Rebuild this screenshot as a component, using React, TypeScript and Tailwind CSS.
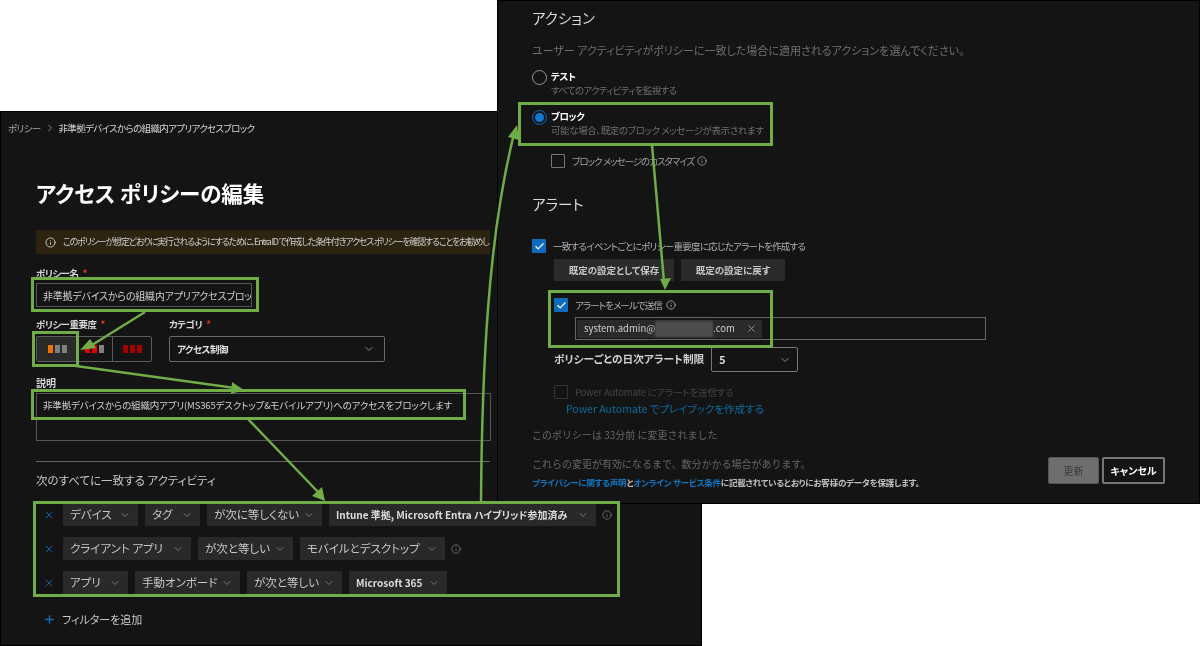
import React from "react";
import { Check, ChevronDown, ChevronRight, Info, Plus, X } from "lucide-react";

type ChipProps = { label: string; width: string; bold?: boolean };

const Chip: React.FC<ChipProps> = ({ label, width, bold }) => (
  <div className={`flex h-[23px] items-center justify-between bg-[#292929] pl-[7px] pr-[7px] ${width}`}>
    <span className={`whitespace-nowrap ${bold ? "text-[10px] font-bold text-[#dcdcdc]" : "text-[11.5px] text-[#c8c8c8]"}`}>{label}</span>
    <ChevronDown className="size-3 text-[#777]" />
  </div>
);

const FilterRow: React.FC<{ children: React.ReactNode; info?: boolean }> = ({ children, info }) => (
  <div className="flex h-[23px] items-center">
    <X className="ml-[42px] mr-[8px] size-3 text-[#0f6cbd]" strokeWidth={1.8} />
    <div className="flex gap-[7px]">{children}</div>
    {info && <Info className="ml-[6px] size-[10px] text-[#777]" />}
  </div>
);

const Required = () => <span className="ml-1 text-[#e03b1a]">*</span>;

const Bars: React.FC<{ colors: string[] }> = ({ colors }) => (
  <div className="flex gap-[2px]">
    <div className={`h-2 w-[5px] ${colors[0]}`} />
    <div className={`h-2 w-[5px] ${colors[1]}`} />
    <div className={`h-2 w-[5px] ${colors[2]}`} />
  </div>
);

const CheckBox: React.FC<{ on?: boolean; dim?: boolean }> = ({ on, dim }) => (
  <div
    className={`flex size-[14px] shrink-0 items-center justify-center rounded-[1px] ${
      on ? "bg-[#0f6cbd]" : dim ? "border border-[#333]" : "border border-[#777]"
    }`}
  >
    {on && <Check className="size-[11px] text-white" strokeWidth={2.5} />}
  </div>
);

const PolicyWindow = () => (
  <div className="absolute left-0 top-[111px] h-[535px] w-[702px] overflow-hidden border border-black bg-[#141414] text-[#d6d6d6] blur-[0.3px]">
    <div className="flex h-[32px] items-center pl-[7px] text-[9.5px] tracking-[-0.65px]">
      <span className="text-[#a8a8a8]">ポリシー</span>
      <ChevronRight className="mx-[3px] size-3 text-[#888]" />
      <span>非準拠デバイスからの組織内アプリアクセスブロック</span>
    </div>
    <div className="pl-[35px] pr-[211px]">
      <h1 className="mt-[31px] h-[36px] text-[21.5px] font-bold leading-[36px] text-white">アクセス ポリシーの編集</h1>
      <div className="mt-[19px] flex h-[24px] items-center overflow-hidden whitespace-nowrap bg-[#2c2310] pl-[9px] text-[9px] tracking-[-1.2px] text-[#cfcfcf]">
        <Info className="mr-[7px] size-[11px] shrink-0" />
        このポリシーが想定どおりに実行されるようにするために、Entra ID で作成した条件付きアクセス ポリシーを確認することをお勧めします
      </div>
      <label className="mt-[10px] block h-[19px] text-[9.5px] font-bold leading-[18px] tracking-[-0.5px]">
        ポリシー名
        <Required />
      </label>
      <div className="flex h-[24px] w-[216px] items-center overflow-hidden whitespace-nowrap border border-[#555] pl-[6px] pr-[5px] text-[10px] tracking-[-0.2px] text-[#cfcfcf]">
        非準拠デバイスからの組織内アプリアクセスブロック
      </div>
      <div className="mt-[8px] flex gap-[17px]">
        <div>
          <label className="block h-[21px] text-[9.5px] font-bold leading-[19px] tracking-[-0.5px]">
            ポリシー重要度
            <Required />
          </label>
          <div className="flex h-[26px] w-[116px] rounded-[2px] border border-[#5c5c5c]">
            <div className="flex w-[40px] items-center justify-center bg-[#2a2a2a]">
              <Bars colors={["bg-[#f07000]", "bg-[#808080]", "bg-[#808080]"]} />
            </div>
            <div className="flex w-[36px] items-center justify-center border-r border-[#5c5c5c]">
              <Bars colors={["bg-[#e00000]", "bg-[#e00000]", "bg-[#808080]"]} />
            </div>
            <div className="flex flex-1 items-center justify-center">
              <Bars colors={["bg-[#a00000]", "bg-[#a00000]", "bg-[#a00000]"]} />
            </div>
          </div>
        </div>
        <div>
          <label className="block h-[21px] text-[9.5px] font-bold leading-[19px] tracking-[-0.5px]">
            カテゴリ
            <Required />
          </label>
          <div className="flex h-[26px] w-[216px] items-center justify-between rounded-[2px] border border-[#6a6a6a] pl-[7px] pr-[9px] text-[9.5px] font-bold tracking-[-0.5px] text-[#e0e0e0]">
            アクセス制御
            <ChevronDown className="size-3 text-[#888]" />
          </div>
        </div>
      </div>
      <label className="mt-[11px] block h-[20px] text-[10px] font-bold leading-[19px]">説明</label>
      <div className="h-[48px] w-[455px] border border-[#555] pl-[6px] pt-[4px] text-[9.5px] tracking-[-0.15px] text-[#cfcfcf]">
        <span className="whitespace-nowrap">非準拠デバイスからの組織内アプリ(MS365デスクトップ&amp;モバイルアプリ)へのアクセスをブロックします</span>
      </div>
      <div className="mt-[20px] h-px bg-[#666]" />
      <div className="mt-[9px] h-[18px] text-[11.5px] leading-[18px] text-[#c8c8c8]">次のすべてに一致する アクティビティ</div>
    </div>
    <div className="mt-[14px] flex flex-col gap-[11px]">
      <FilterRow info>
        <Chip label="デバイス" width="w-[75px]" />
        <Chip label="タグ" width="w-[55px]" />
        <Chip label="が次に等しくない" width="w-[115px]" />
        <Chip label="Intune 準拠, Microsoft Entra ハイブリッド参加済み" width="w-[267px]" bold />
      </FilterRow>
      <FilterRow info>
        <Chip label="クライアント アプリ" width="w-[128px]" />
        <Chip label="が次と等しい" width="w-[95px]" />
        <Chip label="モバイルとデスクトップ" width="w-[145px]" />
      </FilterRow>
      <FilterRow>
        <Chip label="アプリ" width="w-[65px]" />
        <Chip label="手動オンボード" width="w-[105px]" />
        <Chip label="が次と等しい" width="w-[95px]" />
        <Chip label="Microsoft 365" width="w-[98px]" bold />
      </FilterRow>
    </div>
    <div className="mt-[14px] flex h-[22px] items-center pl-[42px] text-[11px] text-[#c8c8c8]">
      <Plus className="mr-[6px] size-[13px] text-[#0f6cbd]" strokeWidth={2.4} />
      フィルターを追加
    </div>
  </div>
);

const ActionWindow = () => (
  <div className="absolute left-[497px] top-0 flex h-[504px] w-[703px] border border-black bg-[#141414] text-[#c8c8c8] blur-[0.3px]">
    <div className="w-[520px] shrink-0 pl-[34px]">
      <h2 className="mt-[7px] h-[20px] text-[14.5px] leading-[20px] text-[#d8d8d8]">アクション</h2>
      <p className="mt-[12px] h-[20px] whitespace-nowrap text-[11px] leading-[20px] text-[#6f6f6f]">
        ユーザー アクティビティがポリシーに一致した場合に適用されるアクションを選んでください。
      </p>
      <div className="mt-[9px] flex h-[28px] items-start">
        <div className="mt-[1px] size-[15px] rounded-full border border-[#999]" />
        <div className="ml-[4px]">
          <div className="h-[14px] text-[9.5px] font-bold leading-[14px] tracking-[-0.4px] text-white">テスト</div>
          <div className="h-[14px] text-[9.5px] leading-[14px] tracking-[-0.7px] text-[#6f6f6f]">すべてのアクティビティを監視する</div>
        </div>
      </div>
      <div className="mt-[12px] flex h-[28px] items-start">
        <div className="mt-[1px] flex size-[15px] items-center justify-center rounded-full border border-[#0f6cbd]">
          <div className="size-[9px] rounded-full bg-[#0f78d4]" />
        </div>
        <div className="ml-[4px]">
          <div className="h-[14px] text-[9.5px] font-bold leading-[14px] tracking-[-0.4px] text-white">ブロック</div>
          <div className="h-[14px] text-[9.5px] leading-[14px] tracking-[-0.4px] text-[#6f6f6f]">可能な場合、既定のブロック メッセージが表示されます</div>
        </div>
      </div>
      <div className="ml-[19px] mt-[16px] flex h-[16px] items-center gap-[7px] text-[9.5px] tracking-[-1px] text-[#a0a0a0]">
        <CheckBox />
        ブロック メッセージのカスタマイズ
        <Info className="-ml-[4px] size-[10px]" />
      </div>
      <h2 className="mt-[25px] h-[20px] text-[14.5px] leading-[20px] text-[#d8d8d8]">アラート</h2>
      <div className="mt-[24px] flex h-[16px] items-center gap-[7px] text-[9.5px] tracking-[-0.7px] text-[#b0b0b0]">
        <CheckBox on />
        一致するイベントごとにポリシー重要度に応じたアラートを作成する
      </div>
      <div className="ml-[22px] mt-[5px] flex gap-[7px]">
        <button className="h-[22px] w-[120px] bg-[#2b2b2b] text-[9.5px] font-bold text-[#c8c8c8]">既定の設定として保存</button>
        <button className="h-[22px] w-[104px] bg-[#2b2b2b] text-[9.5px] font-bold text-[#c8c8c8]">既定の設定に戻す</button>
      </div>
      <div className="ml-[22px] mt-[16px] flex h-[16px] items-center gap-[7px] text-[9.5px] tracking-[-0.9px] text-[#b0b0b0]">
        <CheckBox on />
        アラートをメールで送信
        <Info className="-ml-[3px] size-[10px]" />
      </div>
      <div className="ml-[43px] mt-[4px] flex h-[23px] w-[411px] items-center border border-[#666] pl-px">
        <div className="flex h-[18px] w-[185px] items-center bg-[#2a2a2a] pl-[7px] text-[9.5px] text-[#d0d0d0]">
          <span>system.admin@</span>
          <div className="h-[16px] w-[58px] bg-[#4d4d4d] blur-[1px]" />
          <span>.com</span>
          <X className="ml-[11px] size-[11px] text-[#999]" />
        </div>
      </div>
      <div className="ml-[22px] mt-[7px] flex items-center gap-[7px]">
        <span className="whitespace-nowrap text-[10.7px] font-bold text-[#d0d0d0]">ポリシーごとの日次アラート制限</span>
        <div className="flex h-[25px] w-[87px] items-center justify-between rounded-[2px] border border-[#777] pl-[7px] pr-[6px] text-[10.5px] font-bold text-[#e0e0e0]">
          5
          <ChevronDown className="size-3 text-[#888]" />
        </div>
      </div>
      <div className="ml-[22px] mt-[12px] flex h-[16px] items-center gap-[7px] text-[9.5px] tracking-[-0.2px] text-[#444]">
        <CheckBox dim />
        Power Automate にアラートを送信する
      </div>
      <div className="ml-[34px] mt-[1px] h-[16px] text-[10.5px] leading-[16px] text-[#0f6a9e]">Power Automate でプレイブックを作成する</div>
      <div className="mt-[9px] h-[18px] text-[10px] leading-[18px] text-[#666] [font-feature-settings:normal]">このポリシーは 33分前 に変更されました</div>
      <div className="mt-[11px] h-[18px] text-[10px] leading-[18px] text-[#666] [font-feature-settings:normal]">これらの変更が有効になるまで、数分かかる場合があります。</div>
      <div className="h-[18px] whitespace-nowrap text-[8.5px] font-bold leading-[18px] tracking-[-0.2px] text-[#c0c0c0]">
        <span className="text-[#0f78c4]">プライバシーに関する声明</span>と<span className="text-[#0f78c4]">オンライン サービス条件</span>に記載されているとおりにお客様のデータを保護します。
      </div>
    </div>
    <div className="flex flex-1 items-start justify-end gap-[3px] pr-[34px] pt-[456px]">
      <button className="h-[27px] w-[51px] rounded-[2px] border border-[#555] bg-[#6e6e6e] text-[10px] text-[#3a3a3a]">更新</button>
      <button className="h-[27px] w-[63px] rounded-[2px] border-2 border-[#777] text-[10px] font-bold text-white">キャンセル</button>
    </div>
  </div>
);

// green callouts drawn on top of the two windows
const Callouts = () => (
  <>
    <div className="absolute left-[31px] top-[277px] h-[35px] w-[228px] border-[3px] border-[#70ad47]" />
    <div className="absolute left-[32px] top-[331px] h-[36px] w-[47px] border-[3px] border-[#70ad47]" />
    <div className="absolute left-[31px] top-[389px] h-[31px] w-[435px] border-[3px] border-[#70ad47]" />
    <div className="absolute left-[33px] top-[501px] h-[96px] w-[587px] border-[3px] border-[#70ad47]" />
    <div className="absolute left-[518px] top-[102px] h-[44px] w-[255px] border-[3px] border-[#70ad47]" />
    <div className="absolute left-[548px] top-[290px] h-[58px] w-[225px] border-[3px] border-[#70ad47]" />
    <svg className="absolute left-0 top-0" width={1200} height={646} fill="none" stroke="#70ad47" strokeWidth={2.5}>
      <path d="M145 312 L92 345" />
      <path fill="#70ad47" stroke="none" d="M80 350 L96 348 L90 339 Z" />
      <path d="M76 366 L235 388" />
      <path fill="#70ad47" stroke="none" d="M244 390 L232 382 L231 394 Z" />
      <path d="M248 419 L318 492" />
      <path fill="#70ad47" stroke="none" d="M325 501 L322 487 L312 496 Z" />
      <path d="M481 501 C482 370 488 240 513 138" />
      <path fill="#70ad47" stroke="none" d="M517 125 L508 137 L519 140 Z" />
      <path d="M652 145 L664 282" />
      <path fill="#70ad47" stroke="none" d="M665 290 L660 279 L671 278 Z" />
    </svg>
  </>
);

export default function App() {
  return (
    <div className="relative h-[646px] w-[1200px] overflow-hidden bg-white font-['Noto_Sans_CJK_JP','Noto_Sans',sans-serif] [font-feature-settings:'palt']">
      <PolicyWindow />
      <ActionWindow />
      <Callouts />
    </div>
  );
}
